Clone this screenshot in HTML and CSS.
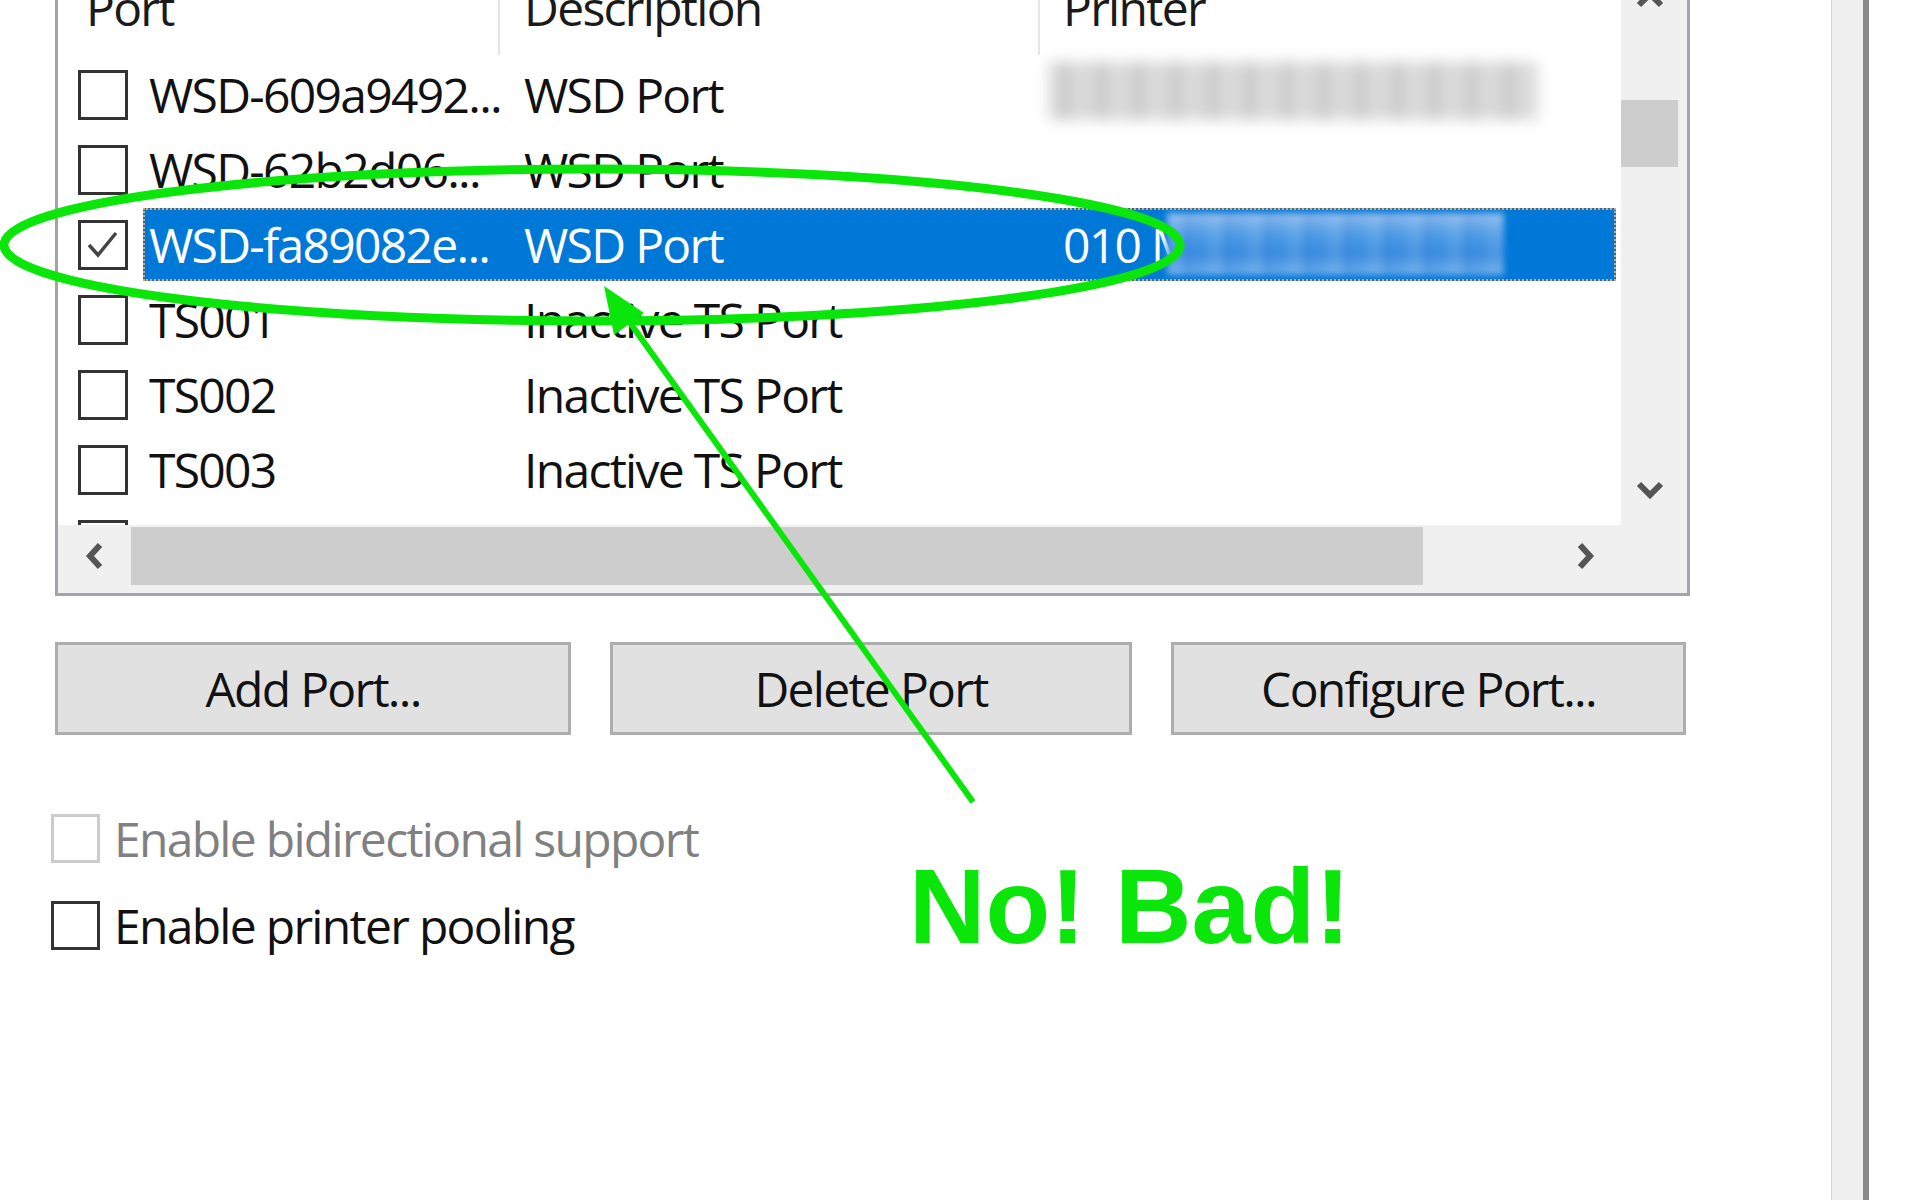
FILE: index.html
```html
<!DOCTYPE html>
<html lang="en">

<head>
  <meta charset="UTF-8">
  <meta name="viewport" content="width=device-width, initial-scale=1.0">
  <title>Ports</title>
  <link rel="stylesheet" href="styles.css">
</head>

<body>
  <div class="dialog">
    <!-- список портов -->
    <div class="ports">
      <div class="ports__list">
        <div class="ports__head">
          <div class="ports__hcell ports__hcell_first">Port</div>
          <div class="ports__hcell">Description</div>
          <div class="ports__hcell ports__hcell_last">Printer</div>
        </div>

        <div class="row">
          <span class="box"></span>
          <div class="row__body">
            <span class="row__port">WSD-609a9492...</span>
            <span>WSD Port</span>
            <span class="row__printer"><i class="smudge smudge_gray"></i></span>
          </div>
        </div>
        <div class="row">
          <span class="box"></span>
          <div class="row__body">
            <span class="row__port">WSD-62b2d06...</span>
            <span>WSD Port</span>
            <span class="row__printer"></span>
          </div>
        </div>
        <div class="row row_active">
          <span class="box box_checked">
            <svg viewBox="0 0 44 44" width="44" height="44"><polyline points="8,22 17,32 35,10" /></svg>
          </span>
          <div class="row__body">
            <span class="row__port">WSD-fa89082e...</span>
            <span>WSD Port</span>
            <span class="row__printer">010 M<i class="smudge smudge_blue"></i></span>
          </div>
        </div>
        <div class="row">
          <span class="box"></span>
          <div class="row__body">
            <span class="row__port">TS001</span>
            <span>Inactive TS Port</span>
            <span class="row__printer"></span>
          </div>
        </div>
        <div class="row">
          <span class="box"></span>
          <div class="row__body">
            <span class="row__port">TS002</span>
            <span>Inactive TS Port</span>
            <span class="row__printer"></span>
          </div>
        </div>
        <div class="row">
          <span class="box"></span>
          <div class="row__body">
            <span class="row__port">TS003</span>
            <span>Inactive TS Port</span>
            <span class="row__printer"></span>
          </div>
        </div>
        <!-- следующая строка видна только краем чекбокса -->
        <div class="row">
          <span class="box"></span>
        </div>
      </div>

      <div class="vscroll">
        <div class="vscroll__btn">
          <svg width="30" height="20" viewBox="0 0 30 20"><polyline points="4,16 15,5 26,16" /></svg>
        </div>
        <div class="vscroll__thumb"></div>
        <div class="vscroll__space"></div>
        <div class="vscroll__btn vscroll__btn_down">
          <svg width="30" height="20" viewBox="0 0 30 20"><polyline points="4,4 15,15 26,4" /></svg>
        </div>
      </div>

      <div class="hscroll">
        <div class="hscroll__btn">
          <svg width="20" height="30" viewBox="0 0 20 30"><polyline points="15,4 5,15 15,26" /></svg>
        </div>
        <div class="hscroll__thumb"></div>
        <div class="hscroll__space"></div>
        <div class="hscroll__btn">
          <svg width="20" height="30" viewBox="0 0 20 30"><polyline points="5,4 15,15 5,26" /></svg>
        </div>
      </div>
      <div class="corner"></div>
    </div>

    <div class="actions">
      <button class="btn btn_add">Add Port...</button>
      <button class="btn btn_del">Delete Port</button>
      <button class="btn btn_cfg">Configure Port...</button>
    </div>

    <div class="options">
      <label class="opt opt_disabled"><span class="box"></span>Enable bidirectional support</label>
      <label class="opt"><span class="box"></span>Enable printer pooling</label>
    </div>
  </div>
  <div class="edge"></div>

  <!-- пометки поверх скриншота -->
  <svg class="marks" width="1920" height="1200" viewBox="0 0 1920 1200">
    <ellipse cx="592" cy="245" rx="588" ry="76" />
    <line x1="628" y1="320" x2="973" y2="802" />
    <polygon points="604,286 614,335 644,313" />
  </svg>
  <div class="shout">No! Bad!</div>
</body>

</html>
```

FILE: styles.css
```css
* {
  box-sizing: border-box;
}

body {
  margin: 0;
  width: 1920px;
  height: 1200px;
  overflow: hidden;
  position: relative;
  display: flex;
  background: #fff;
  font-family: "Open Sans", "Noto Sans", sans-serif;
  font-size: 48px;
  letter-spacing: -1.7px;
  color: #111;
}

.dialog {
  width: 1831px;
}

.edge {
  width: 38px;
  background: #f0f0f0;
  border-left: 1px solid #d6d6d6;
  border-right: 6px solid #8a8a8a;
}

/* listview */
.ports {
  margin: -40px 0 0 55px;
  width: 1635px;
  height: 636px;
  border: 3px solid #a2a4aa;
  display: grid;
  grid-template-columns: 1563px 66px;
  grid-template-rows: 562px 1fr;
}

.ports__list {
  background: #fff;
  overflow: hidden;
}

.ports__head {
  display: grid;
  grid-template-columns: 442px 540px 1fr;
  height: 95px;
}

.ports__hcell {
  height: 92px;
  padding: 7px 0 0 24px;
  line-height: 75px;
  border-right: 2px solid #e5e5e5;
  color: #1a1a1a;
}

.ports__hcell_first {
  padding-left: 28px;
}

.ports__hcell_last {
  border-right: none;
  padding-left: 23px;
}

.row {
  display: flex;
  height: 75px;
}

.box {
  flex: none;
  width: 50px;
  height: 50px;
  border: 3px solid #333;
  background: #fff;
}

.row .box {
  margin: 12px 15px 0 20px;
}

.box svg {
  display: block;
  fill: none;
  stroke: #444;
  stroke-width: 3.5;
}

.row__body {
  flex: 1;
  display: grid;
  grid-template-columns: 381px 539px 1fr;
  height: 73px;
  line-height: 73px;
  margin-right: 5px;
  white-space: nowrap;
}

.row__port {
  padding-left: 6px;
}

.row__printer {
  position: relative;
}

.row_active .row__body {
  background: #0078d7;
  color: #fff;
  outline: 2px dotted #eaa453;
  outline-offset: -2px;
}

.smudge {
  position: absolute;
  display: block;
  filter: blur(7px);
}

.smudge_gray {
  left: -14px;
  top: 4px;
  width: 488px;
  height: 58px;
  background: repeating-linear-gradient(90deg, #d6d6d6 0 14px, #c6c6c6 14px 22px, #dcdcdc 22px 37px);
}

.smudge_blue {
  left: 104px;
  top: 5px;
  width: 337px;
  height: 62px;
  filter: blur(3px);
  background:
    repeating-linear-gradient(90deg, rgba(255, 255, 255, .08) 0 16px, rgba(0, 60, 160, .06) 16px 25px, rgba(255, 255, 255, 0) 25px 40px),
    linear-gradient(180deg, #8dbbec 0, #4f9be6 35%, #3a8de0 65%, #6aa9ea 100%);
}

/* скроллы */
.vscroll {
  display: flex;
  flex-direction: column;
  background: #f0f0f0;
}

.vscroll__btn {
  height: 72px;
  padding-right: 8px;
  display: flex;
  align-items: center;
  justify-content: center;
}

.vscroll__btn_down {
  height: 70px;
}

.vscroll__thumb {
  margin: 65px 9px 0 0;
  height: 67px;
  background: #cdcdcd;
}

.vscroll__space,
.hscroll__space {
  flex: 1;
}

.hscroll {
  display: flex;
  background: #f0f0f0;
}

.hscroll__btn {
  width: 73px;
  height: 62px;
  display: flex;
  align-items: center;
  justify-content: center;
}

.hscroll__thumb {
  width: 1292px;
  height: 58px;
  margin-top: 2px;
  background: #cdcdcd;
}

.corner {
  background: #f0f0f0;
}

.vscroll svg,
.hscroll svg {
  fill: none;
  stroke: #555;
  stroke-width: 6;
}

/* кнопки */
.actions {
  display: flex;
  gap: 39px;
  margin: 46px 0 0 55px;
}

.btn {
  height: 93px;
  padding: 0;
  border: 3px solid #adadad;
  background: #e1e1e1;
  font-family: inherit;
  font-size: 48px;
  letter-spacing: -1.7px;
  color: #111;
}

.btn_add {
  width: 516px;
}

.btn_del {
  width: 522px;
}

.btn_cfg {
  width: 515px;
}

/* чекбоксы */
.options {
  display: flex;
  flex-direction: column;
  gap: 38px;
  margin: 79px 0 0 51px;
}

.opt {
  display: flex;
  align-items: center;
  gap: 14px;
  height: 49px;
  white-space: nowrap;
}

.opt .box {
  width: 49px;
  height: 49px;
}

.opt_disabled {
  color: #808080;
}

.opt_disabled .box {
  border-color: #cccccc;
}

/* пометки */
.marks {
  position: absolute;
  top: 0;
  left: 0;
  pointer-events: none;
}

.marks ellipse,
.marks line {
  fill: none;
  stroke: #0ae60a;
  stroke-width: 9;
}

.marks line {
  stroke-width: 6;
}

.marks polygon {
  fill: #0ae60a;
}

.shout {
  position: absolute;
  left: 909px;
  top: 853px;
  font-family: "Liberation Sans", Arial, sans-serif;
  font-weight: 700;
  font-size: 106px;
  letter-spacing: 0;
  line-height: 1;
  color: #0ae60a;
}
```
